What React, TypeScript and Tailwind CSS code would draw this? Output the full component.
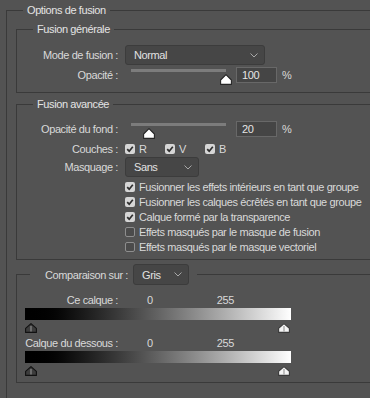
import React from 'react';

const line = "border-[#3a3a3a]";

const Chevron = () => (
    <svg width="8" height="5" viewBox="0 0 8 5">
        <path d="M0.5 0.5 L4 4 L7.5 0.5" stroke="#a8a8a8" strokeWidth="1" fill="none" />
    </svg>
);

const Select = ({ value, className }: { value: string; className: string }) => (
    <div className={`flex items-center justify-between rounded-[3px] border border-[#3c3c3c] bg-[#464646] pl-[8px] pr-[6px] text-[#e2e2e2] ${className}`}>
        <span>{value}</span>
        <Chevron />
    </div>
);

const Check = ({ checked }: { checked: boolean }) =>
    checked ? (
        <span className="flex h-[10px] w-[10px] shrink-0 items-center justify-center rounded-[2px] bg-[#d6d6d6]">
            <svg width="8" height="8" viewBox="0 0 8 8">
                <path d="M1.2 4.2 L3.2 6.2 L6.8 1.8" stroke="#2e2e2e" strokeWidth="1.7" fill="none" />
            </svg>
        </span>
    ) : (
        <span className="h-[10px] w-[10px] shrink-0 rounded-[2px] border border-[#8e8e8e] bg-[#4b4b4b]" />
    );

const Thumb = () => (
    <svg width="12" height="11" viewBox="0 0 12 11">
        <path d="M6 0.7 L11.4 6 V10.4 H0.6 V6 Z" fill="#ffffff" stroke="#262626" strokeWidth="1.1" strokeLinejoin="round" />
    </svg>
);

const Slider = ({ value }: { value: number }) => (
    <div className="relative h-[16px] w-[107px]">
        <div className="mx-[6px] mt-[4px] h-[3px] bg-[#7c7c7c]" />
        <div className="absolute top-[5px]" style={{ left: Math.round((value / 100) * 95) }}>
            <Thumb />
        </div>
    </div>
);

const NumberField = ({ value }: { value: string }) => (
    <div className="ml-[4px] flex h-[16px] w-[41px] items-center border border-[#686868] bg-[#454545] pl-[5px] text-[#e6e6e6]">
        {value}
    </div>
);

const Label = ({ children }: { children: React.ReactNode }) => (
    <span className="w-[101px] shrink-0 text-right">{children}</span>
);

const RangeThumb = ({ dark }: { dark: boolean }) => (
    <svg width="12" height="10" viewBox="0 0 12 10">
        <path
            d="M6 0.6 L11.4 5.4 V9.4 H0.6 V5.4 Z"
            fill={dark ? "#3d3d3d" : "#f4f4f4"}
            stroke={dark ? "#111111" : "#3a3a3a"}
            strokeWidth="1.1"
            strokeLinejoin="round"
        />
        <path d="M6 3 V8.6" stroke={dark ? "#8c8c8c" : "#9a9a9a"} strokeWidth="1.2" />
    </svg>
);

const BlendRange = ({ label }: { label: string }) => (
    <>
        <div className="flex h-[14px] items-center">
            <Label>{label}</Label>
            <span className="ml-[29px]">0</span>
            <span className="ml-[64px]">255</span>
        </div>
        <div className="ml-[8px] mt-[1px] h-[12px] w-[266px] bg-gradient-to-r from-black to-white" />
        <div className="ml-[8px] mt-[3px] flex h-[10px] w-[266px] justify-between pr-[1px]">
            <RangeThumb dark />
            <RangeThumb dark={false} />
        </div>
    </>
);

const options = [
    { text: "Fusionner les effets intérieurs en tant que groupe", checked: true },
    { text: "Fusionner les calques écrêtés en tant que groupe", checked: true },
    { text: "Calque formé par la transparence", checked: true },
    { text: "Effets masqués par le masque de fusion", checked: false },
    { text: "Effets masqués par le masque vectoriel", checked: false },
];

export default function App() {
    return (
        <div className="h-[398px] w-[370px] overflow-hidden bg-[#535353] pt-[3px] font-['Liberation_Sans',Arial,sans-serif] text-[11px] leading-[14px] tracking-[-0.4px] text-[#d9d9d9]">
            <fieldset className={`ml-[6px] border-l border-t ${line} pb-[20px] pl-[9px]`}>
                <legend className="ml-[7px] px-[4px] text-[#e4e4e4]">Options de fusion</legend>

                <fieldset className={`mt-[5px] border-b border-l border-t ${line} pb-[9px] pt-[9px]`}>
                    <legend className="ml-[16px] px-[4px] text-[#e4e4e4]">Fusion générale</legend>
                    <div className="flex h-[20px] items-center">
                        <Label>Mode de fusion :</Label>
                        <Select value="Normal" className="ml-[7px] h-[20px] w-[140px]" />
                    </div>
                    <div className="mt-[2px] flex h-[16px] items-center">
                        <Label>Opacité :</Label>
                        <div className="ml-[7px]">
                            <Slider value={100} />
                        </div>
                        <NumberField value="100" />
                        <span className="ml-[5px]">%</span>
                    </div>
                </fieldset>

                <fieldset className={`mt-[4px] border-b border-l border-t ${line} pb-[5px] pt-[10px]`}>
                    <legend className="ml-[16px] px-[4px] text-[#e4e4e4]">Fusion avancée</legend>
                    <div className="flex h-[16px] items-center">
                        <Label>Opacité du fond :</Label>
                        <div className="ml-[7px]">
                            <Slider value={19} />
                        </div>
                        <NumberField value="20" />
                        <span className="ml-[5px]">%</span>
                    </div>
                    <div className="mt-[5px] flex h-[14px] items-center">
                        <Label>Couches :</Label>
                        <div className="ml-[7px] flex">
                            {["R", "V", "B"].map((c) => (
                                <div key={c} className="flex w-[40px] items-center gap-[4px]">
                                    <Check checked />
                                    <span>{c}</span>
                                </div>
                            ))}
                        </div>
                    </div>
                    <div className="mt-[1px] flex h-[20px] items-center">
                        <Label>Masquage :</Label>
                        <Select value="Sans" className="ml-[7px] h-[20px] w-[74px]" />
                    </div>
                    <div className="mt-[2px] pl-[108px]">
                        {options.map((o) => (
                            <div key={o.text} className="flex h-[15px] items-center gap-[4px] whitespace-nowrap">
                                <Check checked={o.checked} />
                                <span>{o.text}</span>
                            </div>
                        ))}
                    </div>
                </fieldset>

                <fieldset className={`mt-[4px] border-b border-l border-t ${line} pb-[6px] pt-[8px]`}>
                    <legend className="ml-[13px] flex items-center pr-[8px]">
                        <span className="w-[98px] text-right">Comparaison sur :</span>
                        <Select value="Gris" className="ml-[5px] h-[21px] w-[56px]" />
                    </legend>
                    <BlendRange label="Ce calque :" />
                    <div className="mt-[3px]">
                        <BlendRange label="Calque du dessous :" />
                    </div>
                </fieldset>
            </fieldset>
        </div>
    );
}
